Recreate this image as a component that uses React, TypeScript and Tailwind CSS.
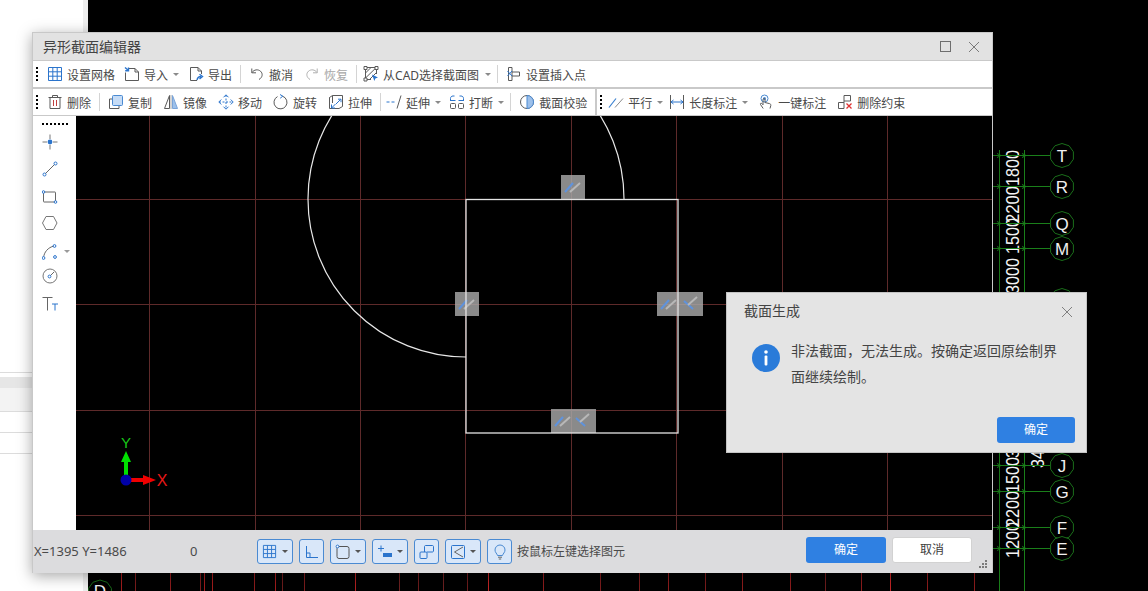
import type { ReactNode } from "react"

const BLUE = "#2b74cc"
const DARK = "#5a5a5a"

const Ic = ({ children, size = 16 }: { children: ReactNode; size?: number }) => (
  <svg width={size} height={size} viewBox="0 0 16 16" fill="none" stroke={DARK} strokeWidth="1" className="shrink-0">
    {children}
  </svg>
)

const Grip = ({ className = "" }: { className?: string }) => (
  <div className={"flex flex-col gap-[2px] " + className}>
    {[0, 1, 2, 3].map((i) => (
      <span key={i} className="w-[2px] h-[2px] bg-black" />
    ))}
  </div>
)

const Caret = ({ className = "ml-[5px]" }: { className?: string }) => (
  <span className={"w-0 h-0 border-x-[3px] border-t-[3px] border-x-transparent border-t-[#8a8a8a] " + className} />
)

const Sep = ({ className = "" }: { className?: string }) => <span className={"w-px h-[18px] bg-[#d4d4d4] " + className} />

const Tool = ({ icon, label, className = "", muted }: { icon: ReactNode; label: string; className?: string; muted?: boolean }) => (
  <div className={"flex items-center gap-[4px] " + className}>
    {icon}
    <span className={"whitespace-nowrap pt-[4px] " + (muted ? "text-[#a8a8a8]" : "text-[#4a4a4a]")}>{label}</span>
  </div>
)

const StatusBtn = ({ children, caret }: { children: ReactNode; caret?: boolean }) => (
  <div className={"h-[25px] rounded-[3px] border border-[#4a8ad2] bg-[#d9e7f9] flex items-center pl-[4px] " + (caret ? "w-[36px]" : "w-[25px]")}>
    {children}
    {caret && <span className="ml-auto mr-[4px] w-0 h-0 border-x-[3px] border-t-[3px] border-x-transparent border-t-[#555]" />}
  </div>
)

const hex = (cx: number, cy: number, r = 12) =>
  Array.from({ length: 10 }, (_, i) => {
    const a = (Math.PI * 2 * i) / 10 - Math.PI / 2
    return (cx + r * Math.cos(a)).toFixed(1) + "," + (cy + r * Math.sin(a)).toFixed(1)
  }).join(" ")

const axes: [string, number][] = [
  ["T", 155],
  ["R", 186],
  ["Q", 223],
  ["M", 248],
  ["", 300],
  ["J", 465],
  ["G", 491],
  ["F", 527],
  ["E", 548],
]

const dims: [string, number, number][] = [
  ["1800", 186, 36],
  ["2200", 223, 37],
  ["1500", 254, 36],
  ["3000", 294, 36],
  ["3", 458, 9],
  ["1500", 493, 36],
  ["2200", 527, 36],
  ["1200", 558, 36],
]

const redLines: [number, string][] = [
  [121, "#a01c1c"], [135, "#7a1c1c"], [170, "#8c1c1c"], [200, "#7a1c1c"], [204, "#a01c1c"], [212, "#a01c1c"],
  [254, "#8c1c1c"], [275, "#a01c1c"], [282, "#6c1c1c"], [304, "#7a1c1c"], [355, "#b02020"], [399, "#6c2020"],
  [418, "#6c1c1c"], [443, "#6c2020"], [467, "#6c1c1c"], [488, "#c02424"], [543, "#8c1c1c"], [600, "#7a1c1c"],
  [639, "#7a1c1c"], [668, "#8c1c1c"], [705, "#7a1c1c"], [742, "#8c1c1c"], [790, "#8c1c1c"], [825, "#6c1c1c"],
  [861, "#8c1c1c"], [890, "#c02424"], [927, "#8c1c1c"], [974, "#8c1c1c"],
]

const CadBackground = () => (
  <svg width="1148" height="591" viewBox="0 0 1148 591" className="absolute left-0 top-0">
    {redLines.map(([x, c]) => (
      <line key={x} x1={x + 0.5} y1="570" x2={x + 0.5} y2="591" stroke={c} strokeWidth="1" />
    ))}
    <polygon points={hex(100, 592, 12)} stroke="#1a6e1a" fill="#000" />
    <text x="100" y="597" textAnchor="middle" fontSize="17" fill="#f0f0f0" fontFamily="Liberation Sans, sans-serif">D</text>
    <line x1="999.5" y1="150" x2="999.5" y2="591" stroke="#1a7f1a" />
    <line x1="1024.5" y1="150" x2="1024.5" y2="591" stroke="#1a7f1a" />
    {dims.map(([t, y, len], i) => (
      <text key={i} transform={"translate(1019 " + y + ") rotate(-90)"} fontSize="19" fill="#f4f4f4" textLength={len} lengthAdjust="spacingAndGlyphs" fontFamily="Liberation Sans, sans-serif">
        {t}
      </text>
    ))}
    <text transform="translate(1044 468) rotate(-90)" fontSize="19" fill="#f4f4f4" textLength="18" lengthAdjust="spacingAndGlyphs" fontFamily="Liberation Sans, sans-serif">34</text>
    {axes.map(([t, y]) => (
      <g key={y}>
        <line x1="993" y1={y + 0.5} x2="1050" y2={y + 0.5} stroke="#1a7f1a" />
        <path d={"M997 " + (y - 1.5) + "L1001 " + (y + 0.5) + "L997 " + (y + 2.5) + "M1022 " + (y - 1.5) + "L1026 " + (y + 0.5) + "L1022 " + (y + 2.5)} stroke="#1a7f1a" fill="none" />
        <polygon points={hex(1062, y + 0.5)} stroke="#1a6e1a" fill="#000" />
        <text x="1062" y={y + 6.5} textAnchor="middle" fontSize="17" fill="#f0f0f0" fontFamily="Liberation Sans, sans-serif">{t}</text>
      </g>
    ))}
  </svg>
)

const Parallel = ({ x, y, w = 24 }: { x: number; y: number; w?: number }) => (
  <g>
    <rect x={x} y={y} width={w} height="24" fill="#a8a8a8" fillOpacity="0.82" />
    <path d={"M" + (x + 4) + " " + (y + 17) + "L" + (x + 12) + " " + (y + 8)} stroke="#5f93dd" strokeWidth="2" />
    <path d={"M" + (x + 9) + " " + (y + 17) + "L" + (x + 19) + " " + (y + 8)} stroke="#b8b8b8" strokeWidth="2" />
  </g>
)

const Perp = ({ x, y, w = 22 }: { x: number; y: number; w?: number }) => (
  <g>
    <rect x={x} y={y} width={w} height="24" fill="#a8a8a8" fillOpacity="0.82" />
    <path d={"M" + (x + 3) + " " + (y + 9) + "L" + (x + 12) + " " + (y + 17)} stroke="#5f93dd" strokeWidth="2" />
    <path d={"M" + (x + 7) + " " + (y + 13) + "L" + (x + 16) + " " + (y + 5)} stroke="#b8b8b8" strokeWidth="2" />
  </g>
)

const Drawing = () => (
  <svg width="916" height="414" viewBox="76 116 916 414" className="block">
    <g stroke="#5e2a2a" strokeWidth="1">
      {[149, 255, 360, 465, 571, 676, 782, 887].map((x) => (
        <line key={x} x1={x + 0.5} y1="116" x2={x + 0.5} y2="530" />
      ))}
      {[199, 304, 410, 515].map((y) => (
        <line key={y} x1="76" y1={y + 0.5} x2="992" y2={y + 0.5} />
      ))}
    </g>
    <path d="M466 357A158 158 0 1 1 624 199" fill="none" stroke="#e8e8e8" strokeWidth="1.2" />
    <Parallel x={561} y={175} />
    <Parallel x={455} y={292} />
    <Parallel x={657} y={292} />
    <Perp x={681} y={292} />
    <Parallel x={551} y={409} w={22} />
    <Perp x={573} y={409} w={23} />
    <rect x="466" y="199.5" width="212" height="233.5" fill="none" stroke="#e4e4e4" strokeWidth="1.3" />
    <text x="126" y="448" textAnchor="middle" fontSize="15" fill="#18c818" fontFamily="Liberation Sans, sans-serif">Y</text>
    <text x="162" y="486" textAnchor="middle" fontSize="16" fill="#e81818" fontFamily="Liberation Sans, sans-serif">X</text>
    <path d="M124 480V462H121L126 451L131 462H128V480Z" fill="#00e000" />
    <path d="M126 478H143V475L156 480L143 485V482H126Z" fill="#f00000" />
    <circle cx="126" cy="480" r="5.5" fill="#0000a8" />
  </svg>
)

const GridIcon = ({ size = 16 }: { size?: number }) => (
  <Ic size={size}>
    <path d="M1.5 1.5H14.5V14.5H1.5ZM1.5 5.8H14.5M1.5 10.2H14.5M5.8 1.5V14.5M10.2 1.5V14.5" stroke={BLUE} />
  </Ic>
)

const App = () => {
  return (
    <div className="relative w-[1148px] h-[591px] overflow-hidden bg-black font-['Noto_Sans','Noto_Sans_CJK_SC',sans-serif] text-[12px]">
      <div className="absolute left-0 top-0 w-[83px] h-full bg-white border-r-[5px] border-[#eeeeee] box-content pt-[372px]">
        <div className="h-px bg-[#dcdcdc]" />
        <div className="mt-[4px] h-[11px] bg-[#e6e6e6]" />
        <div className="h-[24px] bg-[#f3f3f3] border-b border-[#dcdcdc]" />
        <div className="h-[21px] border-b border-[#dcdcdc]" />
        <div className="h-[21px] border-b border-[#dcdcdc]" />
      </div>
      <CadBackground />

      <div className="absolute left-[32px] top-[32px] w-[961px] h-[541px] flex flex-col bg-[#c9c9c9] border-x border-t border-[#c8c8c8] shadow-[0_3px_14px_rgba(0,0,0,0.35)]">
        <div className="h-[27px] shrink-0 bg-[#e2e2e2] flex items-center pl-[10px] pr-[12px] text-[14px] text-[#444444]">
          <span>异形截面编辑器</span>
          <svg width="11" height="11" viewBox="0 0 11 11" fill="none" stroke="#6e6e6e" className="ml-auto">
            <rect x="0.5" y="0.5" width="10" height="10" />
          </svg>
          <svg width="12" height="12" viewBox="0 0 12 12" fill="none" stroke="#7a7a7a" className="ml-[17px]">
            <path d="M1 1L11 11M11 1L1 11" />
          </svg>
        </div>

        <div className="h-[26px] mt-px shrink-0 bg-white flex items-center">
          <Grip className="ml-[3px]" />
          <Tool
            className="ml-[9px]"
            label="设置网格"
            icon={<GridIcon />}
          />
          <Tool
            className="ml-[9px]"
            label="导入"
            icon={
              <Ic>
                <path d="M5 2.5H11L14.5 6V14.5H1.5V6.5M11 2.5V6H14.5" />
                <path d="M1 1.5L4.5 4.5M4.5 1.5V4.8H1.2" stroke={BLUE} strokeWidth="1.4" />
              </Ic>
            }
          />
          <Caret />
          <Tool
            className="ml-[9px]"
            label="导出"
            icon={
              <Ic>
                <path d="M9 14.5H2.5V1.5H10L13.5 5V8M10 1.5V5H13.5" />
                <path d="M9 14C9.5 11.5 11 10.5 13 10.5M11.5 8.3L14.5 10.5L11.5 13" stroke={BLUE} strokeWidth="1.4" />
              </Ic>
            }
          />
          <Sep className="ml-[8px]" />
          <Tool
            className="ml-[8px]"
            label="撤消"
            icon={
              <Ic>
                <path d="M3 6.5C5 3.5 9 3 11.5 5.2C14.2 7.6 13.5 11.5 10 13.5M2.8 2.5V6.8H7" />
              </Ic>
            }
          />
          <Tool
            className="ml-[11px]"
            muted
            label="恢复"
            icon={
              <Ic>
                <path d="M13 6.5C11 3.5 7 3 4.5 5.2C1.8 7.6 2.5 11.5 6 13.5M13.2 2.5V6.8H9" stroke="#b0b0b0" />
              </Ic>
            }
          />
          <Sep className="ml-[8px]" />
          <Tool
            className="ml-[6px]"
            label="从CAD选择截面图"
            icon={
              <Ic>
                <path d="M2.5 1.5H13.5V8M2.5 1.5V13.5H8M2.5 7L8 1.5M2.5 12L13 1.8M7 13L13.5 6.5" />
                <path d="M9 8.5L15 11.5L12.3 12.4L11.4 15Z" fill={BLUE} stroke="none" />
                <path d="M1 0.5H4V3.5H1ZM12 0.5H15V3.5H12ZM1 12H4V15H1Z" fill="#fff" />
              </Ic>
            }
          />
          <Caret className="ml-[6px]" />
          <Sep className="ml-[6px]" />
          <Tool
            className="ml-[8px]"
            label="设置插入点"
            icon={
              <Ic>
                <path d="M2.5 1.5H6V14.5H2.5ZM6 6H13.5V10H6" />
                <path d="M1.5 5L6 10M6 5L1.5 10" stroke={BLUE} />
              </Ic>
            }
          />
        </div>

        <div className="h-[26px] mt-[2px] shrink-0 bg-white flex items-center">
          <Grip className="ml-[3px]" />
          <Tool
            className="ml-[9px]"
            label="删除"
            icon={
              <Ic>
                <path d="M1.5 3.5H14.5M5.5 3.5V1.5H10.5V3.5M3 3.5V14.5H13V3.5" />
                <path d="M6.5 6V12M9.5 6V12" stroke="#c04040" />
              </Ic>
            }
          />
          <Sep className="ml-[8px]" />
          <Tool
            className="ml-[8px]"
            label="复制"
            icon={
              <Ic>
                <path d="M4 5H1.5V14.5H11V12" />
                <rect x="4.5" y="1.5" width="10" height="10" rx="1" fill="#c6dcf6" stroke="#4a8ad2" />
              </Ic>
            }
          />
          <Tool
            className="ml-[11px]"
            label="镜像"
            icon={
              <Ic>
                <path d="M6.5 1.5L1.5 14.5H6.5Z" />
                <path d="M9.5 1.5L14.5 14.5H9.5Z" fill="#9dc0ea" stroke="#7aa4d8" />
                <path d="M8 1V15" stroke="#aaaaaa" />
              </Ic>
            }
          />
          <Tool
            className="ml-[11px]"
            label="移动"
            icon={
              <Ic>
                <path d="M8 1V15M1 8H15" strokeDasharray="2 1.5" stroke={BLUE} />
                <path d="M5.5 3.3L8 0.8L10.5 3.3M5.5 12.7L8 15.2L10.5 12.7M3.3 5.5L0.8 8L3.3 10.5M12.7 5.5L15.2 8L12.7 10.5" stroke={BLUE} />
              </Ic>
            }
          />
          <Tool
            className="ml-[11px]"
            label="旋转"
            icon={
              <Ic>
                <path d="M9.5 2.2A6.5 6.5 0 1 1 4.5 2.6" />
                <path d="M7 0.5L9.8 2.2L7.2 4.2" stroke={BLUE} />
              </Ic>
            }
          />
          <Tool
            className="ml-[11px]"
            label="拉伸"
            icon={
              <Ic>
                <path d="M1.5 3.5L4.5 1.5H14.5V12.5L11 14.5H1.5ZM1.5 3.5V11M4.5 1.5V9" />
                <path d="M8 10L12.5 5.5M10 5.2H13V8.2M3.5 14L7.5 10M7 14H3.5V10.5" stroke={BLUE} />
              </Ic>
            }
          />
          <Sep className="ml-[8px]" />
          <Tool
            className="ml-[5px]"
            label="延伸"
            icon={
              <Ic>
                <path d="M0.5 8H3.5M5.5 8H8.5" stroke={BLUE} />
                <path d="M11 14.5L15 1.5" />
              </Ic>
            }
          />
          <Caret />
          <Tool
            className="ml-[8px]"
            label="打断"
            icon={
              <Ic>
                <rect x="1.5" y="9.5" width="5" height="5" rx="1" />
                <rect x="9.5" y="9.5" width="5" height="5" rx="1" />
                <path d="M1.5 6V4.5C1.5 3 2.5 2 4 2H5.5M14.5 6V4.5C14.5 3 13.5 2 12 2H10.5M6.5 6.5H1M9.5 6.5H15" stroke={BLUE} />
              </Ic>
            }
          />
          <Caret />
          <Sep className="ml-[6px]" />
          <Tool
            className="ml-[8px]"
            label="截面校验"
            icon={
              <Ic>
                <circle cx="8" cy="8" r="6.5" />
                <path d="M8 1.5A6.5 6.5 0 0 1 8 14.5Z" fill="#9dc0ea" stroke="#4a8ad2" />
              </Ic>
            }
          />
          <span className="ml-[8px] w-[2px] self-stretch bg-[#c9c9c9]" />
          <Grip className="ml-[3px]" />
          <Tool
            className="ml-[6px]"
            label="平行"
            icon={
              <Ic>
                <path d="M1 13.5L8 4.5" stroke="#3a80d0" strokeWidth="1.2" />
                <path d="M7 13.5L15 4.5" stroke="#8a8a8a" />
              </Ic>
            }
          />
          <Caret />
          <Tool
            className="ml-[6px]"
            label="长度标注"
            icon={
              <Ic>
                <path d="M1.5 1V15M14.5 1V15" />
                <path d="M2 8H14M4.5 6L2 8L4.5 10M11.5 6L14 8L11.5 10" stroke={BLUE} />
              </Ic>
            }
          />
          <Caret />
          <Tool
            className="ml-[10px]"
            label="一键标注"
            icon={
              <Ic>
                <circle cx="6.5" cy="4.5" r="3.5" stroke="#4a8ad2" />
                <circle cx="6.5" cy="4.5" r="1.5" fill="#4a8ad2" stroke="none" />
                <path d="M5.2 14.5L2.5 10.5C2 9.5 3 8.8 3.8 9.5L5 10.8V5.5C5 4.2 7 4.2 7 5.5V8.5L11.5 9.6C12.5 9.9 13 10.5 12.8 11.5L12 14.5" />
              </Ic>
            }
          />
          <Tool
            className="ml-[11px]"
            label="删除约束"
            icon={
              <Ic>
                <path d="M7 8.5H1.5V14.5H7ZM7 8.5V7H13.5V1.5H7V7" />
                <path d="M9.5 9.5L14.5 14.5M14.5 9.5L9.5 14.5" stroke="#e03030" strokeWidth="1.3" />
              </Ic>
            }
          />
        </div>

        <div className="flex-1 mt-px min-h-0 flex">
          <div className="w-[43px] shrink-0 bg-white flex flex-col items-center pt-[7px]">
            <div className="w-[26px] border-t-2 border-dotted border-black" />
            <div className="mt-[9px] -ml-[9px]">
              <Ic size={16}>
                <path d="M8 0.5V5M8 11V15.5M0.5 8H5M11 8H15.5" stroke="#777777" />
                <circle cx="8" cy="8" r="2.4" fill={BLUE} stroke="none" />
              </Ic>
            </div>
            <div className="mt-[11px] -ml-[9px]">
              <Ic size={16}>
                <path d="M2.5 13.5L13.5 2.5" stroke="#666666" />
                <circle cx="2.5" cy="13.5" r="1.5" fill="#fff" stroke={BLUE} />
                <circle cx="13.5" cy="2.5" r="1.5" fill="#fff" stroke={BLUE} />
              </Ic>
            </div>
            <div className="mt-[12px] -ml-[9px]">
              <Ic size={16}>
                <rect x="1.5" y="3" width="12" height="10" rx="0.5" stroke="#666666" />
                <circle cx="1.5" cy="3" r="1.3" fill="#fff" stroke={BLUE} />
                <circle cx="13.5" cy="13" r="1.3" fill="#fff" stroke={BLUE} />
              </Ic>
            </div>
            <div className="mt-[10px] -ml-[9px]">
              <Ic size={16}>
                <path d="M4 1.5H11.5L15 8L11.5 14.5H4L0.5 8Z" stroke="#777777" />
              </Ic>
            </div>
            <div className="mt-[13px] relative -ml-[9px]">
              <Ic size={16}>
                <path d="M1.5 14C2 8 6 3.5 12 2" stroke="#666666" />
                <circle cx="1.5" cy="14" r="1.4" fill="#fff" stroke={BLUE} />
                <circle cx="12.5" cy="2" r="1.4" fill="#fff" stroke={BLUE} />
                <circle cx="13" cy="13" r="1.4" fill="#fff" stroke={BLUE} />
              </Ic>
              <span className="absolute left-[22px] top-[6px] w-0 h-0 border-x-[3px] border-t-[3px] border-x-transparent border-t-[#9a9a9a]" />
            </div>
            <div className="mt-[8px] -ml-[9px]">
              <Ic size={16}>
                <circle cx="8" cy="8" r="7" stroke="#777777" />
                <path d="M8 8L12 4" stroke="#666666" />
                <circle cx="7.5" cy="8.5" r="1.4" fill="#fff" stroke={BLUE} />
              </Ic>
            </div>
            <div className="mt-[12px] -ml-[9px]">
              <Ic size={16}>
                <path d="M0.5 1.5H10.5M5.5 1.5V14.5" stroke="#666666" />
                <path d="M10 8H16M13 8V14.5" stroke={BLUE} />
              </Ic>
            </div>
          </div>
          <div className="flex-1 bg-black overflow-hidden">
            <Drawing />
          </div>
        </div>

        <div className="relative h-[43px] shrink-0 bg-[#dcdcde] flex items-center">
          <span className="ml-px w-[156px] text-[13px] text-[#4a4a4a]">X=1395 Y=1486</span>
          <span className="w-[67px] text-[13px] text-[#4a4a4a]">0</span>
          <div className="flex items-center gap-[6px]">
            <StatusBtn caret>
              <GridIcon size={15} />
            </StatusBtn>
            <StatusBtn>
              <Ic>
                <path d="M2.5 2V13.5H14" stroke={BLUE} />
                <path d="M2.5 9H6V13.5" stroke={BLUE} />
              </Ic>
            </StatusBtn>
            <StatusBtn caret>
              <Ic>
                <rect x="2" y="2.5" width="12" height="12" rx="2" stroke="#555555" />
                <circle cx="2.5" cy="2.5" r="1.4" fill="#fff" stroke={BLUE} />
              </Ic>
            </StatusBtn>
            <StatusBtn caret>
              <Ic>
                <path d="M1 4.5H7M4 1.5V7.5" stroke={BLUE} />
                <rect x="6" y="9" width="9" height="4" fill={BLUE} stroke="none" />
              </Ic>
            </StatusBtn>
            <StatusBtn>
              <Ic>
                <rect x="1" y="8" width="7" height="6.5" rx="1" stroke={BLUE} />
                <path d="M5.5 8V2.5C5.5 2 6 1.5 6.5 1.5H13.5C14 1.5 14.5 2 14.5 2.5V7C14.5 7.5 14 8 13.5 8H8" stroke={BLUE} />
              </Ic>
            </StatusBtn>
            <StatusBtn caret>
              <Ic>
                <rect x="1.5" y="1.5" width="13" height="13" rx="1" stroke={BLUE} />
                <path d="M13 3L4.5 8L13 13" stroke="#666666" />
              </Ic>
            </StatusBtn>
            <StatusBtn>
              <Ic>
                <path d="M5.5 11.5C5 9.5 3 8.5 3 6C3 3.2 5.2 1 8 1C10.8 1 13 3.2 13 6C13 8.5 11 9.5 10.5 11.5Z" stroke="#4a8ad2" />
                <path d="M6 13.2H10M6.8 15H9.2" stroke="#666666" />
              </Ic>
            </StatusBtn>
          </div>
          <span className="ml-[5px] text-[#4a4a4a] whitespace-nowrap">按鼠标左键选择图元</span>
          <button className="ml-auto w-[80px] h-[26px] -mt-[4px] rounded-[3px] bg-[#2f80e2] text-white">确定</button>
          <button className="ml-[6px] mr-[20px] w-[80px] h-[26px] -mt-[4px] rounded-[3px] bg-white border border-[#d2d2d2] text-[#3c3c3c]">取消</button>
          <svg width="9" height="9" viewBox="0 0 9 9" className="absolute right-[4px] bottom-[4px]" fill="#7a7a7a">
            <rect x="6" y="0" width="2" height="2" />
            <rect x="3" y="3" width="2" height="2" />
            <rect x="6" y="3" width="2" height="2" />
            <rect x="0" y="6" width="2" height="2" />
            <rect x="3" y="6" width="2" height="2" />
            <rect x="6" y="6" width="2" height="2" />
          </svg>
        </div>
      </div>

      <div className="absolute left-[726px] top-[292px] w-[361px] h-[161px] bg-[#e4e4e4] border border-[#c4c4c4] flex flex-col">
        <div className="flex items-center h-[35px] pl-[17px] pr-[13px] text-[14px] text-[#444444] shrink-0">
          <span>截面生成</span>
          <svg width="12" height="12" viewBox="0 0 12 12" fill="none" stroke="#808080" className="ml-auto mt-[2px]">
            <path d="M1 1L11 11M11 1L1 11" />
          </svg>
        </div>
        <div className="flex pl-[25px] pr-[22px] pt-[10px]">
          <svg width="28" height="28" viewBox="0 0 28 28" className="shrink-0 mt-[6px]">
            <circle cx="14" cy="14" r="14" fill="#2a7bd9" />
            <circle cx="14" cy="8" r="1.8" fill="#fff" />
            <rect x="12.6" y="11.5" width="2.8" height="10" rx="1" fill="#fff" />
          </svg>
          <p className="ml-[11px] text-[14px] leading-[26px] text-[#444444]">非法截面，无法生成。按确定返回原绘制界面继续绘制。</p>
        </div>
        <button className="absolute left-[270px] top-[124px] w-[78px] h-[26px] rounded-[3px] bg-[#2f80e2] text-white">确定</button>
      </div>
    </div>
  )
}

export default App
